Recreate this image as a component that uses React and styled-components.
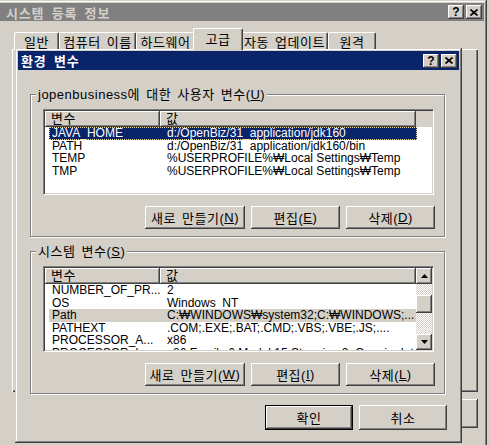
import React from 'react';
import styled, { createGlobalStyle, css } from 'styled-components';

const face = '#d4d0c8';

const GlobalStyle = createGlobalStyle`
  html, body { margin: 0; padding: 0; background: ${face}; overflow: hidden; }
  body {
    font-family: "Liberation Sans", "Noto Sans CJK KR", sans-serif;
    font-size: 12px;
    color: #000;
  }
`;

// Gulim-like label text: latin from Liberation, hangul from Noto
const label = css`
  font-family: "Liberation Sans", "Noto Sans CJK KR", sans-serif;
  font-size: 13px;
  letter-spacing: 0.5px;
  word-spacing: 2px;
`;

const raised = css`
  box-shadow: inset -1px -1px #404040, inset 1px 1px #fff,
    inset -2px -2px #808080, inset 2px 2px ${face};
`;

const frame = css`
  box-shadow: inset -1px -1px #404040, inset 1px 1px ${face},
    inset -2px -2px #808080, inset 2px 2px #fff;
`;

const Screen = styled.div`
  position: relative;
  width: 490px;
  height: 445px;
  overflow: hidden;
  background: ${face};
`;

// windows on the desktop
const OuterWindow = styled.div`
  position: absolute;
  left: -3px;
  top: 0;
  width: 490px;
  height: 480px;
  box-sizing: border-box;
  padding: 3px;
  background: ${face};
  display: flex;
  flex-direction: column;
  ${frame}
`;

const Dialog = styled.div`
  position: absolute;
  left: 15px;
  top: 48px;
  width: 447px;
  height: 395px;
  box-sizing: border-box;
  padding: 3px;
  background: ${face};
  display: flex;
  flex-direction: column;
  ${frame}
`;

const Caption = styled.div`
  height: ${p => p.$h}px;
  flex: none;
  display: flex;
  align-items: center;
  justify-content: space-between;
  padding: 0 2px 0 ${p => p.$pad}px;
  background: ${p => (p.$active ? '#0a246a' : '#808080')};
  color: ${p => (p.$active ? '#fff' : face)};
  font-family: "Liberation Sans", "Noto Sans CJK KR", sans-serif;
  font-weight: bold;
  font-size: 13px;
  letter-spacing: 0.8px;
  word-spacing: 3px;
`;

const CaptionButtons = styled.div`
  display: flex;
  gap: 2px;
`;

const CaptionButton = styled.div`
  width: 16px;
  height: 14px;
  display: flex;
  align-items: center;
  justify-content: center;
  background: ${face};
  color: #000;
  font-family: "Liberation Sans", sans-serif;
  font-weight: bold;
  font-size: 12px;
  letter-spacing: 0;
  ${raised}
`;

const OuterBody = styled.div`
  padding: 7px 6px 0 12px;
  display: flex;
  flex-direction: column;
`;

const TabRow = styled.div`
  display: flex;
  align-items: flex-end;
  height: 21px;
  padding-left: 2px;
  position: relative;
  z-index: 1;
`;

const Tab = styled.div`
  width: ${p => p.$w}px;
  height: ${p => (p.$active ? 22 : 17)}px;
  margin: ${p => (p.$active ? '0 -2px -1px' : '0')};
  box-sizing: border-box;
  display: flex;
  align-items: center;
  justify-content: center;
  background: ${face};
  border-left: 1px solid #fff;
  border-top: 1px solid #fff;
  border-right: 1px solid #404040;
  border-radius: 2px 2px 0 0;
  box-shadow: inset -1px 0 #808080;
  ${label}
  white-space: nowrap;
  padding-bottom: ${p => (p.$active ? 3 : 0)}px;
  position: relative;
  z-index: ${p => (p.$active ? 2 : 0)};
`;

const TabPanel = styled.div`
  height: 343px;
  background: ${face};
  box-shadow: inset 1px 1px #fff, inset -1px -1px #404040, inset -2px -2px #808080;
`;

const OuterButtons = styled.div`
  display: flex;
  justify-content: flex-end;
  gap: 6px;
  margin-top: 7px;
`;

const Client = styled.div`
  flex: 1;
  display: flex;
  flex-direction: column;
  padding: 24px 12px 0 12px;
`;

const Group = styled.div`
  position: relative;
  width: 415px;
  box-sizing: border-box;
  margin-top: ${p => p.$top || 0}px;
  border: 1px solid #808080;
  box-shadow: inset 1px 1px #fff, 1px 1px #fff;
  padding: 14px 9px 7px 12px;
  display: flex;
  flex-direction: column;
`;

const Legend = styled.div`
  position: absolute;
  top: -9px;
  left: 5px;
  padding: 0 2px;
  line-height: 17px;
  background: ${face};
  ${label}
  white-space: nowrap;
`;

const ListView = styled.div`
  width: 391px;
  height: 86px;
  box-sizing: border-box;
  background: #fff;
  border: 1px solid;
  border-color: #808080 #fff #fff #808080;
  box-shadow: inset 1px 1px #404040, inset -1px -1px ${face};
  padding: 1px;
  display: flex;
  overflow: hidden;
`;

const ListMain = styled.div`
  width: ${p => p.$w}px;
  flex: none;
  overflow: hidden;
`;

const Header = styled.div`
  display: flex;
  height: 16px;
  background: ${face};
`;

const HeaderCell = styled.div`
  width: ${p => p.$w}px;
  flex: none;
  box-sizing: border-box;
  padding-left: 6px;
  line-height: 16px;
  ${label}
  ${raised}
`;

const Row = styled.div`
  display: flex;
  width: 368px;
  height: 12.6px;
  line-height: 12px;
  margin-left: 4px;
  white-space: nowrap;
  ${p => p.$selected && css`
    background: #0a246a;
    color: #fff;
    outline: 1px dotted #f0e0a8;
    outline-offset: -1px;
  `}
  ${p => p.$inactive && css`
    background: ${face};
  `}
`;

const Cell = styled.div`
  width: ${p => p.$w}px;
  flex: none;
  box-sizing: border-box;
  padding-left: ${p => p.$pad}px;
  overflow: hidden;
`;

const ScrollBar = styled.div`
  width: 16px;
  flex: none;
  display: flex;
  flex-direction: column;
`;

const ScrollArrow = styled.div`
  width: 16px;
  height: 16px;
  flex: none;
  display: flex;
  align-items: center;
  justify-content: center;
  background: ${face};
  ${raised}
`;

const ScrollTrack = styled.div`
  flex: 1;
  padding-top: 11px;
  background: repeating-conic-gradient(${face} 0 25%, #fff 0 50%) 0 0 / 2px 2px;
`;

const ScrollThumb = styled.div`
  width: 16px;
  height: 18px;
  background: ${face};
  ${raised}
`;

const ButtonRow = styled.div`
  display: flex;
  justify-content: flex-end;
  gap: 6px;
  margin-top: ${p => p.$top}px;
  padding-right: ${p => p.$right || 0}px;
`;

const Button = styled.div`
  width: ${p => p.$w}px;
  height: ${p => p.$h || 23}px;
  box-sizing: border-box;
  display: flex;
  align-items: center;
  justify-content: center;
  background: ${face};
  ${label}
  white-space: nowrap;
  ${raised}
  ${p => p.$default && css`
    border: 1px solid #000;
  `}

  u { text-decoration-thickness: 1px; text-underline-offset: 1px; }
`;

const CloseGlyph = () => (
  <svg width="8" height="7" viewBox="0 0 8 7">
    <path d="M0.5 0.5 L7.5 6.5 M7.5 0.5 L0.5 6.5" stroke="#000" strokeWidth="1.7" />
  </svg>
);

const Arrow = ({ down }) => (
  <svg width="7" height="4" viewBox="0 0 7 4">
    <path d={down ? 'M0 0 H7 L3.5 4Z' : 'M3.5 0 L7 4 H0Z'} fill="#000" />
  </svg>
);

const tabs = [
  { label: '일반', w: 45 },
  { label: '컴퓨터 이름', w: 77 },
  { label: '하드웨어', w: 59 },
  { label: '고급', w: 50, active: true },
  { label: '자동 업데이트', w: 87 },
  { label: '원격', w: 48 },
];

const userVars = [
  { name: 'JAVA_HOME', value: 'd:/OpenBiz/31_application/jdk160', selected: true },
  { name: 'PATH', value: 'd:/OpenBiz/31_application/jdk160/bin' },
  { name: 'TEMP', value: '%USERPROFILE%₩Local Settings₩Temp' },
  { name: 'TMP', value: '%USERPROFILE%₩Local Settings₩Temp' },
];

const systemVars = [
  { name: 'NUMBER_OF_PR...', value: '2' },
  { name: 'OS', value: 'Windows_NT' },
  { name: 'Path', value: 'C:₩WINDOWS₩system32;C:₩WINDOWS;...', inactive: true },
  { name: 'PATHEXT', value: '.COM;.EXE;.BAT;.CMD;.VBS;.VBE;.JS;....' },
  { name: 'PROCESSOR_A...', value: 'x86' },
  { name: 'PROCESSOR_I...', value: 'x86 Family 6 Model 15 Stepping 2, GenuineIntel' },
];

const VarRows = ({ items }) =>
  items.map(v => (
    <Row key={v.name} $selected={v.selected} $inactive={v.inactive}>
      <Cell $w={111} $pad={3}>{v.name}</Cell>
      <Cell $w={257} $pad={7}>{v.value}</Cell>
    </Row>
  ));

const VarHeader = () => (
  <Header>
    <HeaderCell $w={115}>변수</HeaderCell>
    <HeaderCell $w={256}>값</HeaderCell>
  </Header>
);

const VarButtons = ({ keys }) => (
  <ButtonRow $top={11}>
    <Button $w={100}>새로 만들기(<u>{keys[0]}</u>)</Button>
    <Button $w={89}>편집(<u>{keys[1]}</u>)</Button>
    <Button $w={89}>삭제(<u>{keys[2]}</u>)</Button>
  </ButtonRow>
);

export default function App() {
  return (
    <Screen>
      <GlobalStyle />
      <OuterWindow>
        <Caption $h={18} $pad={6}>
          <span>시스템 등록 정보</span>
          <CaptionButtons>
            <CaptionButton>?</CaptionButton>
            <CaptionButton><CloseGlyph /></CaptionButton>
          </CaptionButtons>
        </Caption>
        <OuterBody>
          <TabRow>
            {tabs.map(t => (
              <Tab key={t.label} $w={t.w} $active={t.active}>{t.label}</Tab>
            ))}
          </TabRow>
          <TabPanel />
          <OuterButtons>
            <Button $w={75} $h={29}>확인</Button>
            <Button $w={75} $h={29}>취소</Button>
            <Button $w={75} $h={29}>적용(A)</Button>
          </OuterButtons>
        </OuterBody>
      </OuterWindow>

      <Dialog>
        <Caption $h={19} $pad={3} $active>
          <span>환경 변수</span>
          <CaptionButtons>
            <CaptionButton>?</CaptionButton>
            <CaptionButton><CloseGlyph /></CaptionButton>
          </CaptionButtons>
        </Caption>
        <Client>
          <Group>
            <Legend>jopenbusiness에 대한 사용자 변수(<u>U</u>)</Legend>
            <ListView>
              <ListMain $w={387}>
                <VarHeader />
                <VarRows items={userVars} />
              </ListMain>
            </ListView>
            <VarButtons keys={['N', 'E', 'D']} />
          </Group>

          <Group $top={14}>
            <Legend>시스템 변수(<u>S</u>)</Legend>
            <ListView>
              <ListMain $w={371}>
                <VarHeader />
                <VarRows items={systemVars} />
              </ListMain>
              <ScrollBar>
                <ScrollArrow><Arrow /></ScrollArrow>
                <ScrollTrack><ScrollThumb /></ScrollTrack>
                <ScrollArrow><Arrow down /></ScrollArrow>
              </ScrollBar>
            </ListView>
            <VarButtons keys={['W', 'I', 'L']} />
          </Group>

          <ButtonRow $top={11} $right={-1}>
            <Button $w={88} $h={25} $default>확인</Button>
            <Button $w={88} $h={25}>취소</Button>
          </ButtonRow>
        </Client>
      </Dialog>
    </Screen>
  );
}
